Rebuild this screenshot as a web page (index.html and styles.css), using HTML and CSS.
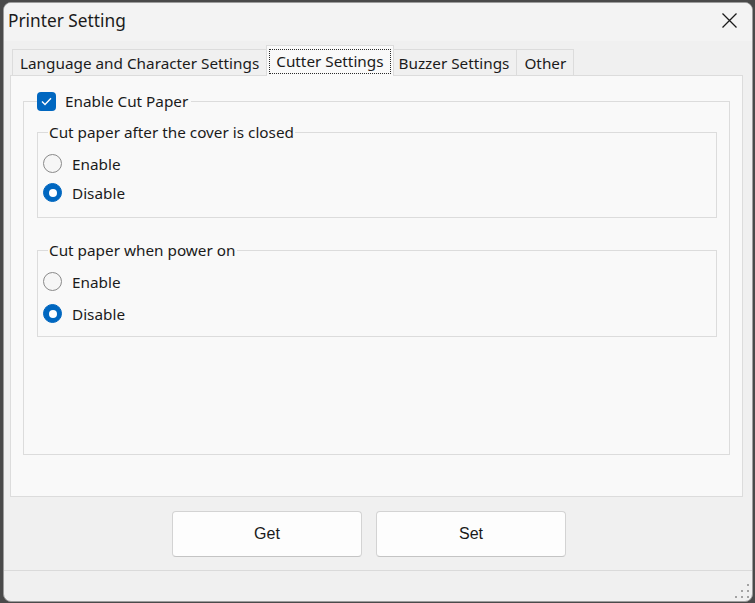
FILE: index.html
```html
<!DOCTYPE html>
<html lang="en">
<head>
  <meta charset="UTF-8" />
  <title>Printer Setting</title>
  <link rel="stylesheet" href="styles.css">
</head>
<body>
  <div class="window">
    <div class="titlebar">
      <span class="title">Printer Setting</span>
      <button class="close" title="Close">
        <svg width="15" height="15" viewBox="0 0 15 15"><path d="M0.5 0.5 L14.5 14.5 M14.5 0.5 L0.5 14.5" stroke="#1a1a1a" stroke-width="1.3" fill="none"/></svg>
      </button>
    </div>

    <div class="content">
      <div class="tabs">
        <div class="tab">Language and Character Settings</div>
        <div class="tab active"><span class="focus">Cutter Settings</span></div>
        <div class="tab">Buzzer Settings</div>
        <div class="tab">Other</div>
      </div>

      <div class="panel">
        <fieldset class="cutbox">
          <legend>
            <label class="check">
              <span class="box"><svg width="11" height="9" viewBox="0 0 11 9"><path d="M1 4.6 L4 7.5 L10 1.3" stroke="#fff" stroke-width="1.4" fill="none"/></svg></span>
              Enable Cut Paper
            </label>
          </legend>

          <fieldset class="group">
            <legend>Cut paper after the cover is closed</legend>
            <label class="radio"><span class="dot"></span>Enable</label>
            <label class="radio on"><span class="dot"></span>Disable</label>
          </fieldset>

          <fieldset class="group loose">
            <legend>Cut paper when power on</legend>
            <label class="radio"><span class="dot"></span>Enable</label>
            <label class="radio on"><span class="dot"></span>Disable</label>
          </fieldset>
        </fieldset>
      </div>

      <div class="actions">
        <button class="btn">Get</button>
        <button class="btn">Set</button>
      </div>
    </div>

    <div class="statusbar">
      <svg class="grip" width="14" height="14" viewBox="0 0 14 14" fill="#a3a3a3">
        <rect x="12" y="0" width="2" height="2"/>
        <rect x="6" y="6" width="2" height="2"/><rect x="12" y="6" width="2" height="2"/>
        <rect x="0" y="12" width="2" height="2"/><rect x="6" y="12" width="2" height="2"/><rect x="12" y="12" width="2" height="2"/>
      </svg>
    </div>
  </div>
</body>
</html>
```

FILE: styles.css
```css
* { box-sizing: border-box; }
body { margin: 0; background: #4a4a4a; font-family: 'Noto Sans', 'Open Sans', sans-serif; font-size: 15.3px; color: #1b1b1b; overflow: hidden; }
.window { margin: 2px 2px 0 3px; width: 750px; height: 600px; border: 1px solid #9c9c9c; border-radius: 8px; background: #f0f0f0; overflow: hidden; display: flex; flex-direction: column; }

.titlebar { height: 38px; flex: none; display: flex; align-items: center; justify-content: space-between; padding-left: 4px; background: #f3f3f3; }
.title { font-size: 17.3px; padding-bottom: 3px; }
.close { width: 46px; height: 38px; border: none; background: transparent; display: flex; align-items: center; justify-content: center; padding: 0 0 4px; }

.content { flex: none; padding: 0 9px 0 6px; }
.tabs { height: 34px; display: flex; align-items: flex-end; padding-left: 2px; }
.tab { height: 26px; padding: 0 7px; display: flex; align-items: center; background: #f0f0f0; border: 1px solid #dcdcdc; border-bottom: none; margin-left: -1px; white-space: nowrap; }
.tab:first-child { margin-left: 0; }
.tab.active { height: 31px; margin: 0 -2px -1px -1px; padding: 0 2px; background: #f9f9f9; position: relative; z-index: 1; }
.tab.active .focus { border: 1px dotted #2a2a2a; padding: 1px 6px 2px; line-height: 20px; }

.panel { height: 422px; background: #f9f9f9; border: 1px solid #dcdcdc; padding: 15px 12px 0 12px; }

fieldset { margin: 0; min-width: 0; }
legend { line-height: 20px; }
.cutbox { border: 1px solid #dcdcdc; padding: 11px 12px 117px 13px; }
.cutbox > legend { padding: 0 3px 0 0; }
.check { display: flex; align-items: center; gap: 9px; }
.box { width: 19px; height: 19px; border-radius: 4px; background: #0067c0; display: flex; align-items: center; justify-content: center; }

.group { border: 1px solid #dcdcdc; padding: 7px 10px 10px 5px; display: flex; flex-direction: column; }
.group > legend { margin-left: 5px; padding: 0 1px; }
.group.loose { margin-top: 22px; padding-top: 7px; padding-bottom: 8px; gap: 3px; }
.radio { height: 29px; display: flex; align-items: center; gap: 10px; }
.dot { width: 19px; height: 19px; border-radius: 50%; border: 1px solid #8a8a8a; background: #f6f6f6; display: flex; align-items: center; justify-content: center; }
.radio.on .dot { border-color: #0067c0; background: #0067c0; }
.radio.on .dot::after { content: ""; width: 8px; height: 8px; border-radius: 50%; background: #fff; }

.actions { display: flex; gap: 14px; padding: 14px 0 0 162px; height: 73px; }
.btn { width: 190px; height: 46px; background: #fdfdfd; border: 1px solid #d3d3d3; border-bottom-color: #c4c4c4; border-radius: 4px; font-family: 'Liberation Sans', Arial, sans-serif; font-size: 16px; color: #1a1a1a; }

.statusbar { flex: 1; border-top: 1px solid #dadada; display: flex; align-items: flex-end; justify-content: flex-end; padding: 0 3px 3px 0; }
```
